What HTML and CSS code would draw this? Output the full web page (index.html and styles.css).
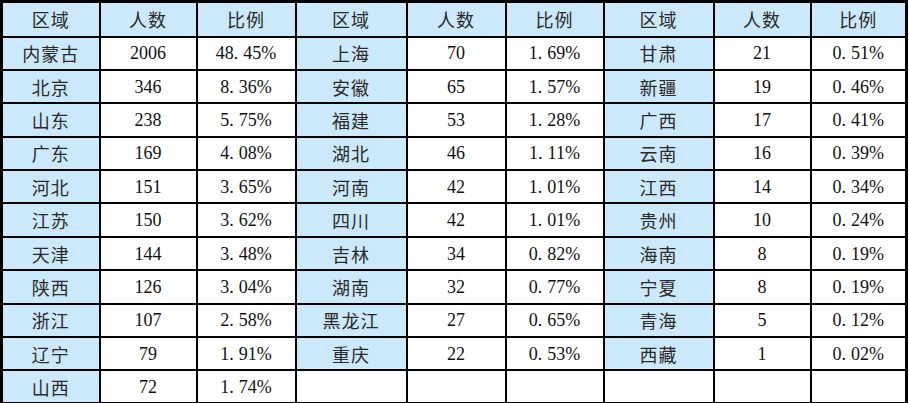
FILE: index.html
```html
<!DOCTYPE html>
<html lang="zh-CN">
<head>
<meta charset="utf-8">
<title>区域人数比例</title>
<link rel="stylesheet" href="styles.css">
</head>
<body>
<table class="stats">
  <colgroup>
    <col class="c1"><col class="c2"><col class="c3">
    <col class="c4"><col class="c5"><col class="c6">
    <col class="c7"><col class="c8"><col class="c9">
  </colgroup>
  <thead>
    <tr class="head">
      <th class="zh">区域</th><th class="zh">人数</th><th class="zh">比例</th>
      <th class="zh">区域</th><th class="zh">人数</th><th class="zh">比例</th>
      <th class="zh">区域</th><th class="zh">人数</th><th class="zh">比例</th>
    </tr>
  </thead>
  <tbody>
    <tr>
      <td class="region">内蒙古</td><td class="num">2006</td><td class="pct">48<span class="dot">.</span>45%</td>
      <td class="region">上海</td><td class="num">70</td><td class="pct">1<span class="dot">.</span>69%</td>
      <td class="region">甘肃</td><td class="num">21</td><td class="pct">0<span class="dot">.</span>51%</td>
    </tr>
    <tr>
      <td class="region">北京</td><td class="num">346</td><td class="pct">8<span class="dot">.</span>36%</td>
      <td class="region">安徽</td><td class="num">65</td><td class="pct">1<span class="dot">.</span>57%</td>
      <td class="region">新疆</td><td class="num">19</td><td class="pct">0<span class="dot">.</span>46%</td>
    </tr>
    <tr>
      <td class="region">山东</td><td class="num">238</td><td class="pct">5<span class="dot">.</span>75%</td>
      <td class="region">福建</td><td class="num">53</td><td class="pct">1<span class="dot">.</span>28%</td>
      <td class="region">广西</td><td class="num">17</td><td class="pct">0<span class="dot">.</span>41%</td>
    </tr>
    <tr>
      <td class="region">广东</td><td class="num">169</td><td class="pct">4<span class="dot">.</span>08%</td>
      <td class="region">湖北</td><td class="num">46</td><td class="pct">1<span class="dot">.</span>11%</td>
      <td class="region">云南</td><td class="num">16</td><td class="pct">0<span class="dot">.</span>39%</td>
    </tr>
    <tr>
      <td class="region">河北</td><td class="num">151</td><td class="pct">3<span class="dot">.</span>65%</td>
      <td class="region">河南</td><td class="num">42</td><td class="pct">1<span class="dot">.</span>01%</td>
      <td class="region">江西</td><td class="num">14</td><td class="pct">0<span class="dot">.</span>34%</td>
    </tr>
    <tr>
      <td class="region">江苏</td><td class="num">150</td><td class="pct">3<span class="dot">.</span>62%</td>
      <td class="region">四川</td><td class="num">42</td><td class="pct">1<span class="dot">.</span>01%</td>
      <td class="region">贵州</td><td class="num">10</td><td class="pct">0<span class="dot">.</span>24%</td>
    </tr>
    <tr>
      <td class="region">天津</td><td class="num">144</td><td class="pct">3<span class="dot">.</span>48%</td>
      <td class="region">吉林</td><td class="num">34</td><td class="pct">0<span class="dot">.</span>82%</td>
      <td class="region">海南</td><td class="num">8</td><td class="pct">0<span class="dot">.</span>19%</td>
    </tr>
    <tr>
      <td class="region">陕西</td><td class="num">126</td><td class="pct">3<span class="dot">.</span>04%</td>
      <td class="region">湖南</td><td class="num">32</td><td class="pct">0<span class="dot">.</span>77%</td>
      <td class="region">宁夏</td><td class="num">8</td><td class="pct">0<span class="dot">.</span>19%</td>
    </tr>
    <tr>
      <td class="region">浙江</td><td class="num">107</td><td class="pct">2<span class="dot">.</span>58%</td>
      <td class="region">黑龙江</td><td class="num">27</td><td class="pct">0<span class="dot">.</span>65%</td>
      <td class="region">青海</td><td class="num">5</td><td class="pct">0<span class="dot">.</span>12%</td>
    </tr>
    <tr>
      <td class="region">辽宁</td><td class="num">79</td><td class="pct">1<span class="dot">.</span>91%</td>
      <td class="region">重庆</td><td class="num">22</td><td class="pct">0<span class="dot">.</span>53%</td>
      <td class="region">西藏</td><td class="num">1</td><td class="pct">0<span class="dot">.</span>02%</td>
    </tr>
    <tr>
      <td class="region">山西</td><td class="num">72</td><td class="pct">1<span class="dot">.</span>74%</td>
      <td></td><td></td><td></td>
      <td></td><td></td><td></td>
    </tr>
  </tbody>
</table>
</body>
</html>
```

FILE: styles.css
```css
html, body {
  margin: 0;
  padding: 0;
  background: #ffffff;
}

.stats {
  border-collapse: collapse;
  table-layout: fixed;
  width: 908px;
  height: 402px;
  border: 3px solid #000;
  font-family: "Liberation Serif", "Noto Sans CJK SC", serif;
  font-size: 18px;
  color: #111;
}

.c1 { width: 98px; }
.c2 { width: 97px; }
.c3 { width: 99px; }
.c4 { width: 111px; }
.c5 { width: 99px; }
.c6 { width: 98px; }
.c7 { width: 110px; }
.c8 { width: 97px; }
.c9 { width: 96px; }

.stats th,
.stats td {
  border: 2px solid #000;
  padding: 0;
  text-align: center;
  vertical-align: middle;
  font-weight: normal;
  line-height: 20px;
}

.head { height: 35px; }
.stats tbody tr { height: 33.4px; }

.head th {
  background: #cce8fb;
}

.zh,
.region {
  font-family: "Noto Sans CJK SC", sans-serif;
  font-weight: 300;
  letter-spacing: 1px;
  color: #2a2a2a;
}

.region {
  background: #cce8fb;
}

.num {
  color: #111;
}

.pct {
  color: #111;
  padding-left: 4px;
}

.dot {
  margin-right: 5px;
}
```
